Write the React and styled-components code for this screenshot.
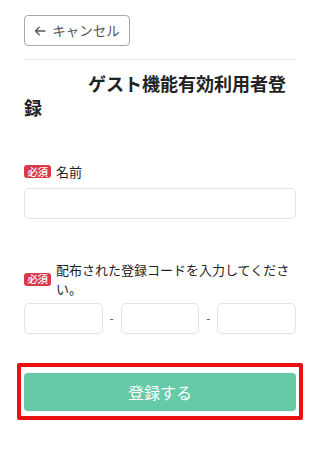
import React from "react";
import styled, { createGlobalStyle } from "styled-components";

const Global = createGlobalStyle`
  html, body { margin: 0; padding: 0; background: #fff; }
  body {
    font-family: "Noto Sans CJK JP", "Noto Sans", sans-serif;
    color: #222;
  }
  * { box-sizing: border-box; }
`;

const Page = styled.div`
  width: 320px;
  padding: 15px 24px 0;
  display: flex;
  flex-direction: column;
`;

const Toolbar = styled.div`
  display: flex;
  padding-bottom: 13px;
  border-bottom: 1px solid #ececec;
`;

const CancelButton = styled.button`
  display: inline-flex;
  align-items: center;
  justify-content: center;
  gap: 6px;
  height: 31px;
  width: 106px;
  padding: 0;
  white-space: nowrap;
  border: 1px solid #a8a8a8;
  border-radius: 4px;
  background: #fff;
  color: #555;
  font-family: inherit;
  font-size: 13.5px;
  line-height: 1;
`;

const Title = styled.h1`
  margin: 11px 0 0;
  font-size: 18px;
  font-weight: 700;
  line-height: 24px;
  text-indent: 64px;
  color: #222;
`;

const Field = styled.div`
  display: flex;
  flex-direction: column;
  gap: ${(p) => p.$gap}px;
  margin-top: ${(p) => p.$top}px;
`;

const Label = styled.div`
  display: flex;
  align-items: center;
  gap: 5px;
`;

const Badge = styled.span`
  flex: none;
  display: inline-flex;
  align-items: center;
  justify-content: center;
  width: 27px;
  height: 13px;
  border-radius: 3px;
  background: #d83a47;
  color: #fff;
  font-size: 10.5px;
  font-weight: 500;
  line-height: 1;
  letter-spacing: -0.5px;
`;

const LabelText = styled.span`
  font-size: 13px;
  line-height: 19.5px;
  color: #222;
`;

const Input = styled.input`
  display: block;
  width: 100%;
  height: ${(p) => p.$h}px;
  border: 1px solid #e3e3e3;
  border-radius: 5px;
  background: #fff;
  font-family: inherit;
  font-size: 14px;
  padding: 0 8px;
`;

const CodeRow = styled.div`
  display: grid;
  grid-template-columns: 1fr 18px 1fr 18px 1fr;
  align-items: center;
`;

const Dash = styled.span`
  text-align: center;
  font-size: 12px;
  color: #555;
  line-height: 1;
`;

const Highlight = styled.div`
  margin: 29px -7px 0;
  border: 4px solid #ea1010;
  border-radius: 2px;
  padding: 6px 3px 5px;
`;

const SubmitButton = styled.button`
  display: flex;
  align-items: center;
  justify-content: center;
  width: 100%;
  height: 38px;
  border: none;
  border-radius: 4px;
  background: #67caa6;
  color: #fff;
  font-family: inherit;
  font-size: 16px;
`;

const ArrowIcon = () => (
  <svg width="12" height="10" viewBox="0 0 12 10" fill="none" stroke="#555" strokeWidth="1.3" strokeLinecap="round" strokeLinejoin="round">
    <path d="M11 5H1.5M5.2 1.3L1.5 5l3.7 3.7" />
  </svg>
);

export default function App() {
  return (
    <>
      <Global />
      <Page>
        <Toolbar>
          <CancelButton>
            <ArrowIcon />
            キャンセル
          </CancelButton>
        </Toolbar>
        <Title>ゲスト機能有効利用者登録</Title>
        <Field $top={43} $gap={6}>
          <Label>
            <Badge>必須</Badge>
            <LabelText>名前</LabelText>
          </Label>
          <Input $h={31} />
        </Field>
        <Field $top={41} $gap={4}>
          <Label>
            <Badge>必須</Badge>
            <LabelText>配布された登録コードを入力してください。</LabelText>
          </Label>
          <CodeRow>
            <Input $h={31} />
            <Dash>-</Dash>
            <Input $h={31} />
            <Dash>-</Dash>
            <Input $h={31} />
          </CodeRow>
        </Field>
        <Highlight>
          <SubmitButton>登録する</SubmitButton>
        </Highlight>
      </Page>
    </>
  );
}
